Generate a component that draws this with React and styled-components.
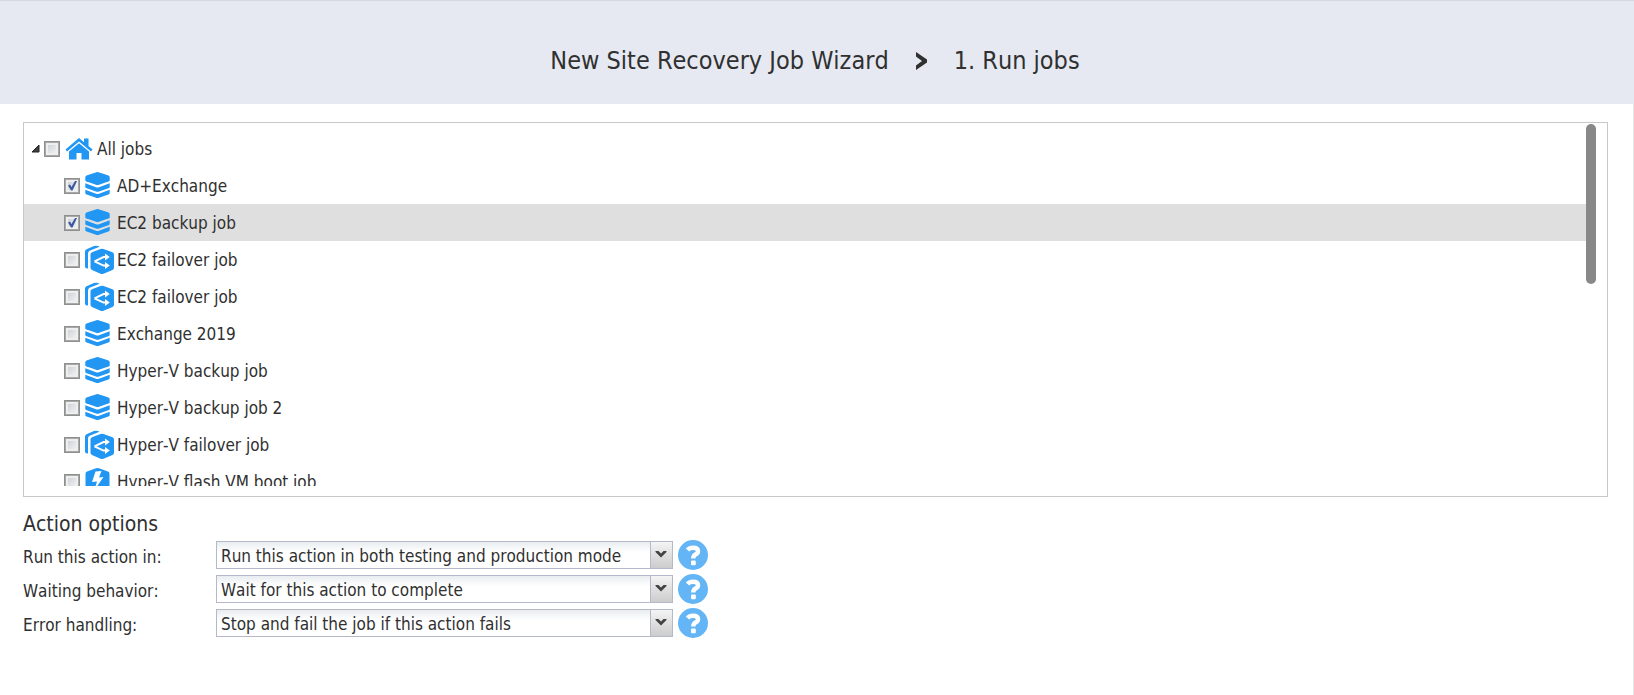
import React, { useState } from "react";
import styled, { createGlobalStyle } from "styled-components";

const GlobalStyle = createGlobalStyle`
  *, *::before, *::after { box-sizing: border-box; }
  body {
    margin: 0;
    background: #ffffff;
    color: #303030;
    font-family: Tahoma, "DejaVu Sans Condensed", "Noto Sans", sans-serif;
    font-size: 17px;
    font-kerning: none;
  }
`;

const Page = styled.div`
  display: flex;
  flex-direction: column;
  min-height: 100vh;
`;

const Header = styled.header`
  display: flex;
  align-items: center;
  justify-content: center;
  gap: 26px;
  padding: 42px 16px 26px 12px;
  border-top: 1px solid #d6d9e0;
  background: #e6e9f1;
`;

const Title = styled.h1`
  margin: 0;
  font-size: 25px;
  font-weight: 400;
  line-height: 35px;
`;

const Step = styled.span`
  font-size: 25px;
  line-height: 35px;
`;

const Main = styled.main`
  flex: 1;
  padding: 18px 25px 24px 23px;
  border-right: 1px solid #e5e5e5;
`;

const TreePanel = styled.section`
  position: relative;
  padding-bottom: 10px;
  border: 1px solid #c8c8c8;
`;

const TreeList = styled.ul`
  height: 363px;
  margin: 0;
  padding: 7px 20px 0 0;
  overflow: hidden;
  list-style: none;
`;

const TreeRow = styled.li`
  display: flex;
  align-items: center;
  height: 37px;
  padding-left: ${(p) => (p.$root ? 7 : 40)}px;
  background: ${(p) => (p.$selected ? "#dfdfdf" : "transparent")};
`;

const Expander = styled.button`
  display: flex;
  width: 13px;
  padding: 0;
  border: 0;
  background: none;
`;

const RowLabel = styled.label`
  display: flex;
  align-items: center;
  line-height: 20px;
  white-space: nowrap;
`;

const CheckBox = styled.span`
  display: grid;
  width: 16px;
  height: 16px;

  & > * { grid-area: 1 / 1; }
  & > svg { pointer-events: none; }
`;

const CheckInput = styled.input`
  appearance: none;
  width: 16px;
  height: 16px;
  margin: 0;
  border: 1px solid #8e8f8f;
  background: linear-gradient(135deg, #c4c8d0, #fafafa);
  box-shadow: inset 0 0 0 1px #a8a8a8, inset 0 0 0 3px #eeeeee;
`;

const RowIcon = styled.span`
  display: flex;
  width: 32px;
  margin-left: 5px;
`;

const ScrollThumb = styled.div`
  position: absolute;
  top: 1px;
  right: 11px;
  width: 10px;
  height: 160px;
  border-radius: 5px;
  background: #888888;
`;

const Options = styled.section`
  display: flex;
  flex-direction: column;
  gap: 4px;
  padding-top: 15px;
`;

const OptionsTitle = styled.h2`
  margin: 0;
  font-size: 21px;
  font-weight: 400;
  line-height: 24px;
`;

const OptionRow = styled.div`
  display: grid;
  grid-template-columns: 188px 457px 30px;
  column-gap: 5px;
  align-items: center;
  height: 30px;
`;

const OptionLabel = styled.label`
  padding-top: 4px;
  line-height: 20px;
`;

const Combo = styled.div`
  display: grid;
  grid-template-columns: 1fr 22px;
  height: 28px;
  border: 1px solid #b5b8c8;
`;

const Select = styled.select`
  grid-area: 1 / 1 / 2 / 3;
  appearance: none;
  min-width: 0;
  padding: 2px 24px 0 4px;
  border: 0;
  border-radius: 0;
  background: linear-gradient(#e9edf0, #ffffff 40%);
  color: inherit;
  font: inherit;
  font-kerning: none;
`;

const Trigger = styled.span`
  grid-area: 1 / 2;
  display: flex;
  align-items: center;
  justify-content: center;
  padding: 0 1px 2px 0;
  border-left: 1px solid #b5b8c8;
  background: linear-gradient(#f4f4f4, #cccccc);
  pointer-events: none;
`;

const HelpButton = styled.button`
  display: flex;
  padding: 0;
  border: 0;
  background: none;
`;

const BLUE = "#2196f3";

function Chevron() {
  return (
    <svg width="13" height="20" viewBox="0 0 13 20" aria-hidden="true">
      <path d="M1 1L12 8.500V11.500L1 19V14.500L7 10L1 5.500Z" fill="#303030" />
    </svg>
  );
}

function HomeIcon() {
  return (
    <svg width="28" height="24" viewBox="0 0 28 24" aria-hidden="true">
      <path d="M14 1L0.500 12.500L2 14.500L14 4.500L26 14.500L27.500 12.500L23.500 9V1.500H19V5.200Z" fill={BLUE} />
      <path d="M14 6.300L4 14.500V22.500H11.500V16H16.500V22.500H24V14.500Z" fill={BLUE} />
    </svg>
  );
}

function BackupIcon() {
  return (
    <svg width="25" height="30" viewBox="0 0 25 30" fill={BLUE} aria-hidden="true">
      <path d="M12.500 1Q13.500 1 23.500 4.500Q24.700 5 24.700 6V9.500Q24.700 10 24 10.300L14 13.800Q12.500 14.300 11 13.800L1 10.300Q0.300 10 0.300 9.500V6Q0.300 5 1.500 4.500Q11.500 1 12.500 1Z" />
      <path d="M0.300 12.300L11 16.300Q12.500 16.800 14 16.300L24.700 12.300V16Q24.700 16.700 24 17L14 20.500Q12.500 21 11 20.500L1 17Q0.300 16.700 0.300 16Z" />
      <path d="M0.300 18.800L11 22.800Q12.500 23.300 14 22.800L24.700 18.800V22Q24.700 22.900 24 23.200L14 26.800Q12.500 27.300 11 26.800L1 23.200Q0.300 22.900 0.300 22Z" />
    </svg>
  );
}

function FailoverIcon() {
  return (
    <svg width="30" height="30" viewBox="0 0 30 30" fill={BLUE} aria-hidden="true">
      <path d="M0 22V6.500Q0 5 1.500 4.300L9 1Q11 0.300 13 1L14.500 1.700L4.500 5.800Q3 6.800 3 8.500V23.500Q0.300 23.500 0 22Z" />
      <path d="M15.500 4Q17 3.500 18.500 4L27.500 7.200Q29 7.900 29 9.400V22.700Q29 24.200 27.500 24.900L18.500 28.800Q17 29.300 15.500 28.800L7 24.900Q5.500 24.200 5.500 22.700V9.400Q5.500 7.900 7 7.200Z" />
      <path d="M9.500 16.300L18.500 12H21.500M9.500 16.300L18.500 20.600H21.500" fill="none" stroke="#fff" strokeWidth="2" />
      <path d="M20 8.500L24.800 12L20 15.500ZM20 17.100L24.800 20.600L20 24.100Z" fill="#fff" />
    </svg>
  );
}

function FlashIcon() {
  return (
    <svg width="25" height="30" viewBox="0 0 25 30" aria-hidden="true">
      <path d="M11 1.300Q12.500 0.700 14 1.300L23 4.600Q24.500 5.200 24.500 6.800V21Q24.500 22.500 23 23.200L14 26.700Q12.500 27.300 11 26.700L2 23.200Q0.500 22.500 0.500 21V6.800Q0.500 5.200 2 4.600Z" fill={BLUE} />
      <path d="M10.500 4.500L16.500 4L14 10.500L18.500 10L9.500 23L12 14.500L7 15Z" fill="#fff" />
    </svg>
  );
}

function CheckMark() {
  return (
    <svg width="16" height="16" viewBox="0 0 16 16" aria-hidden="true">
      <path d="M4 7.500L6 6.500L7.500 9L11 3H13L8.500 12.500H7Z" fill="#3c5aa0" />
    </svg>
  );
}

const ICONS = { home: HomeIcon, backup: BackupIcon, failover: FailoverIcon, flash: FlashIcon };

const JOBS = [
  { name: "All jobs", icon: "home", root: true },
  { name: "AD+Exchange", icon: "backup", checked: true },
  { name: "EC2 backup job", icon: "backup", checked: true, selected: true },
  { name: "EC2 failover job", icon: "failover" },
  { name: "EC2 failover job", icon: "failover" },
  { name: "Exchange 2019", icon: "backup" },
  { name: "Hyper-V backup job", icon: "backup" },
  { name: "Hyper-V backup job 2", icon: "backup" },
  { name: "Hyper-V failover job", icon: "failover" },
  { name: "Hyper-V flash VM boot job", icon: "flash" },
];

const OPTIONS = [
  { id: "mode", label: "Run this action in:", value: "Run this action in both testing and production mode" },
  { id: "waiting", label: "Waiting behavior:", value: "Wait for this action to complete" },
  { id: "errors", label: "Error handling:", value: "Stop and fail the job if this action fails" },
];

function JobRow({ job }) {
  const [checked, setChecked] = useState(Boolean(job.checked));
  const Icon = ICONS[job.icon];
  return (
    <TreeRow $root={job.root} $selected={job.selected}>
      {job.root && (
        <Expander type="button" aria-label="Collapse">
          <svg width="9" height="9" viewBox="0 0 9 9" aria-hidden="true">
            <path d="M8 1V8H1Z" fill="#404040" stroke="#202020" strokeLinejoin="round" />
          </svg>
        </Expander>
      )}
      <RowLabel>
        <CheckBox>
          <CheckInput type="checkbox" checked={checked} onChange={() => setChecked(!checked)} />
          {checked && <CheckMark />}
        </CheckBox>
        <RowIcon><Icon /></RowIcon>
        {job.name}
      </RowLabel>
    </TreeRow>
  );
}

export default function App() {
  return (
    <Page>
      <GlobalStyle />
      <Header>
        <Title>New Site Recovery Job Wizard</Title>
        <Chevron />
        <Step>1. Run jobs</Step>
      </Header>
      <Main>
        <TreePanel>
          <TreeList>
            {JOBS.map((job, i) => <JobRow key={i} job={job} />)}
          </TreeList>
          <ScrollThumb />
        </TreePanel>
        <Options>
          <OptionsTitle>Action options</OptionsTitle>
          {OPTIONS.map((o) => (
            <OptionRow key={o.id}>
              <OptionLabel htmlFor={o.id}>{o.label}</OptionLabel>
              <Combo>
                <Select id={o.id}><option>{o.value}</option></Select>
                <Trigger>
                  <svg width="12" height="8" viewBox="0 0 12 8" aria-hidden="true">
                    <path d="M0.500 1H3.500L6 3.500L8.500 1H11.500V2L6 7.500L0.500 2Z" fill="#444" />
                  </svg>
                </Trigger>
              </Combo>
              <HelpButton type="button" aria-label="Help">
                <svg width="30" height="30" viewBox="0 0 30 30" aria-hidden="true">
                  <circle cx="15" cy="15" r="15" fill="#64b5f6" />
                  <path d="M9.500 10Q11.500 7.800 15 7.800Q20 7.800 20 11.200Q20 13.300 17.500 14.500Q15.300 15.600 15.300 18.500" fill="none" stroke="#fff" strokeWidth="4.500" />
                  <rect x="13" y="20.500" width="4.800" height="4.800" rx="1" fill="#fff" />
                </svg>
              </HelpButton>
            </OptionRow>
          ))}
        </Options>
      </Main>
    </Page>
  );
}
